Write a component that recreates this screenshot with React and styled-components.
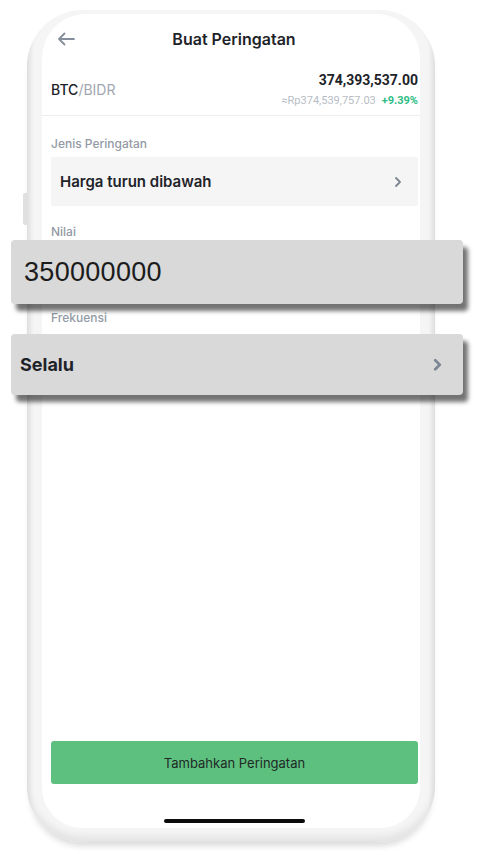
import React from 'react';
import styled, { createGlobalStyle } from 'styled-components';

const GlobalStyle = createGlobalStyle`
  html, body {
    margin: 0;
    padding: 0;
    background: #ffffff;
  }
  body {
    font-family: Inter, Roboto, "Liberation Sans", sans-serif;
    color: #1e2329;
  }
`;

const Stage = styled.div`
  width: 485px;
  height: 855px;
  box-sizing: border-box;
  padding: 10px 0 0 27px;
  overflow: hidden;
`;

const Phone = styled.div`
  position: relative;
  width: 408px;
  height: 832px;
  box-sizing: border-box;
  padding: 4px 15px 14px;
  border-radius: 56px;
  background: linear-gradient(90deg, #e6e6e6 0, #f5f5f5 7px, #f5f5f5 calc(100% - 7px), #e6e6e6 100%);
  box-shadow: 0 7px 6px -3px rgba(0, 0, 0, 0.14), inset 0 -6px 7px rgba(0, 0, 0, 0.07);

  &::before {
    content: '';
    position: absolute;
    left: -4px;
    top: 183px;
    width: 4px;
    height: 32px;
    border-radius: 2px 0 0 2px;
    background: #e0e0e0;
  }
`;

const Screen = styled.div`
  height: 100%;
  box-sizing: border-box;
  display: flex;
  flex-direction: column;
  background: #ffffff;
  border-radius: 44px 44px 40px 40px;
`;

const Header = styled.div`
  height: 49px;
  display: grid;
  grid-template-columns: 48px 1fr 42px;
  align-items: center;
`;

const BackButton = styled.div`
  display: flex;
  align-items: center;
  padding-left: 15px;
`;

const Title = styled.div`
  text-align: center;
  font-size: 16px;
  font-weight: 600;
  color: #1e2329;
`;

const PairRow = styled.div`
  height: 53px;
  box-sizing: border-box;
  padding: 0 2px 0 9px;
  display: flex;
  align-items: center;
  justify-content: space-between;
  border-bottom: 1px solid #eceef1;
`;

const Pair = styled.div`
  font-size: 14px;
  font-weight: 500;
  color: #1e2329;
  span {
    color: #a1a7b1;
    font-weight: 400;
  }
`;

const PriceCol = styled.div`
  display: flex;
  flex-direction: column;
  align-items: flex-end;
  gap: 5px;
`;

const Price = styled.div`
  font-family: Roboto, Inter, sans-serif;
  font-size: 14px;
  line-height: 18px;
  font-weight: 700;
  color: #1e2329;
`;

const SubPrice = styled.div`
  font-family: Roboto, Inter, sans-serif;
  font-size: 11px;
  line-height: 14px;
  color: #b7bdc6;
  display: flex;
  gap: 6px;
  b {
    color: #2ebd85;
    font-weight: 700;
  }
`;

const Body = styled.div`
  padding: 20px 2px 0 9px;
  display: flex;
  flex-direction: column;
`;

const Label = styled.div`
  margin-top: ${p => p.$top || 0}px;
  font-size: 12px;
  line-height: 16px;
  font-weight: 500;
  color: #939aa5;
`;

const Select = styled.div`
  margin-top: 5px;
  height: 49px;
  box-sizing: border-box;
  padding: 0 16px 0 9px;
  display: flex;
  align-items: center;
  justify-content: space-between;
  background: #f5f5f5;
  border-radius: 2px;
  font-size: 15px;
  font-weight: 600;
  color: #1e2329;
`;

const PopCard = styled.div`
  position: relative;
  z-index: 1;
  margin: ${p => p.$top || 0}px -45px 0 -40px;
  height: ${p => p.$height}px;
  box-sizing: border-box;
  padding: ${p => p.$pad};
  display: flex;
  align-items: center;
  justify-content: space-between;
  background: #d9d9d9;
  border-radius: 4px;
  box-shadow: 5px 7px 4px rgba(0, 0, 0, 0.55);
`;

const BigValue = styled.div`
  font-family: "Liberation Sans", Arial, sans-serif;
  font-size: 27px;
  color: #1c1c1c;
  letter-spacing: 0.3px;
`;

const BigOption = styled.div`
  font-size: 18px;
  font-weight: 700;
  color: #1e2329;
`;

const Footer = styled.div`
  margin-top: auto;
  padding: 0 2px 5px 9px;
  display: flex;
  flex-direction: column;
`;

const AddButton = styled.div`
  height: 43px;
  display: flex;
  align-items: center;
  justify-content: center;
  background: #5ec07f;
  border-radius: 3px;
  font-size: 13px;
  color: #1f2a26;
`;

const HomeBar = styled.div`
  margin: 35px 0 0 113px;
  width: 141px;
  height: 4px;
  border-radius: 2px;
  background: #0b0b0b;
`;

const Chevron = ({ size = 8, weight = 1.8 }) => (
  <svg width={size} height={size * 1.5} viewBox="0 0 8 12" fill="none">
    <path d="M2 2l4 4-4 4" stroke="#7d8693" strokeWidth={weight} strokeLinecap="round" strokeLinejoin="round" />
  </svg>
);

const BackArrow = () => (
  <svg width="18" height="14" viewBox="0 0 18 14" fill="none">
    <path d="M17 7H2M7.5 1.5L2 7l5.5 5.5" stroke="#848e9c" strokeWidth="1.8" strokeLinecap="round" strokeLinejoin="round" />
  </svg>
);

export default function App() {
  return (
    <>
      <GlobalStyle />
      <Stage>
        <Phone>
          <Screen>
            <Header>
              <BackButton><BackArrow /></BackButton>
              <Title>Buat Peringatan</Title>
              <div />
            </Header>
            <PairRow>
              <Pair>BTC<span>/BIDR</span></Pair>
              <PriceCol>
                <Price>374,393,537.00</Price>
                <SubPrice>≈Rp374,539,757.03<b>+9.39%</b></SubPrice>
              </PriceCol>
            </PairRow>
            <Body>
              <Label>Jenis Peringatan</Label>
              <Select>
                Harga turun dibawah
                <Chevron />
              </Select>
              <Label $top={18}>Nilai</Label>
              <PopCard $height={64} $pad="0 20px 0 13px">
                <BigValue>350000000</BigValue>
              </PopCard>
              <Label $top={6}>Frekuensi</Label>
              <PopCard $top={8} $height={61} $pad="0 21px 0 9px">
                <BigOption>Selalu</BigOption>
                <Chevron size={9} weight={2.4} />
              </PopCard>
            </Body>
            <Footer>
              <AddButton>Tambahkan Peringatan</AddButton>
              <HomeBar />
            </Footer>
          </Screen>
        </Phone>
      </Stage>
    </>
  );
}
